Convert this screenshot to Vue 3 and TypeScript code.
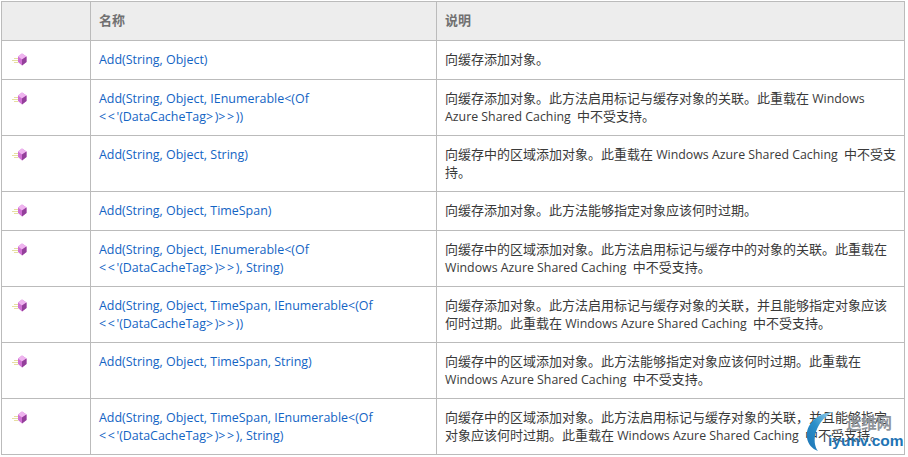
<script setup lang="ts">
interface Row { name: string[]; desc: string[] }
interface Run { text: string; cjk: boolean }
interface NameRun { text: string; angle: boolean }

const rows: Row[] = [
  { name: ['Add(String, Object)'], desc: ['向缓存添加对象。'] },
  { name: ['Add(String, Object, IEnumerable<(Of', "<<'(DataCacheTag>)>>))"], desc: ['向缓存添加对象。此方法启用标记与缓存对象的关联。此重载在 Windows', 'Azure Shared Caching 中不受支持。'] },
  { name: ['Add(String, Object, String)'], desc: ['向缓存中的区域添加对象。此重载在 Windows Azure Shared Caching 中不受支', '持。'] },
  { name: ['Add(String, Object, TimeSpan)'], desc: ['向缓存添加对象。此方法能够指定对象应该何时过期。'] },
  { name: ['Add(String, Object, IEnumerable<(Of', "<<'(DataCacheTag>)>>), String)"], desc: ['向缓存中的区域添加对象。此方法启用标记与缓存中的对象的关联。此重载在', 'Windows Azure Shared Caching 中不受支持。'] },
  { name: ['Add(String, Object, TimeSpan, IEnumerable<(Of', "<<'(DataCacheTag>)>>))"], desc: ['向缓存添加对象。此方法启用标记与缓存对象的关联，并且能够指定对象应该', '何时过期。此重载在 Windows Azure Shared Caching 中不受支持。'] },
  { name: ['Add(String, Object, TimeSpan, String)'], desc: ['向缓存中的区域添加对象。此方法能够指定对象应该何时过期。此重载在', 'Windows Azure Shared Caching 中不受支持。'] },
  { name: ['Add(String, Object, TimeSpan, IEnumerable<(Of', "<<'(DataCacheTag>)>>), String)"], desc: ['向缓存中的区域添加对象。此方法启用标记与缓存对象的关联，并且能够指定', '对象应该何时过期。此重载在 Windows Azure Shared Caching 中不受支持。'] },
]

function runs(line: string): Run[] {
  return line
    .split(/([\u3000-\u9fff\uff00-\uffef]+)/)
    .filter((t) => t.length > 0)
    .map((t) => ({ text: t, cjk: /^[\u3000-\u9fff\uff00-\uffef]/.test(t) }))
}

function nameRuns(line: string, index: number): NameRun[] {
  if (index === 0) return [{ text: line, angle: false }]
  return line
    .split(/([<>]+)/)
    .filter((t) => t.length > 0)
    .map((t) => ({ text: t, angle: /^[<>]/.test(t) }))
}
</script>

<template>
  <div class="page">
    <div class="table">
      <div class="row head">
        <div class="cell c1"></div>
        <div class="cell c2">名称</div>
        <div class="cell c3">说明</div>
      </div>
      <div v-for="(r, i) in rows" :key="i" class="row">
        <div class="cell c1">
          <svg class="icon" width="16" height="13" viewBox="0 0 16 13">
            <path d="M3 5.500h4M1 7.500h6M3 9.500h4" stroke="#e6dfa0" stroke-width="1" fill="none" />
            <path d="M11 0.500L15.500 3.500V9L11 12.500 7 9V3.500z" fill="#d070d4" />
            <path d="M11 0.500L15.500 3.500 11 6.500 7 3.500z" fill="#efb4ef" />
            <path d="M11 6.500L15.500 3.500V9L11 12.500z" fill="#93409a" />
          </svg>
        </div>
        <div class="cell c2">
          <a v-for="(l, j) in r.name" :key="j" class="line"><span v-for="(t, k) in nameRuns(l, j)" :key="k" :class="{ angle: t.angle }">{{ t.text }}</span></a>
        </div>
        <div class="cell c3">
          <span v-for="(l, j) in r.desc" :key="j" class="line"><span v-for="(t, k) in runs(l)" :key="k" :class="{ cjk: t.cjk }">{{ t.text }}</span></span>
        </div>
      </div>
    </div>
    <div class="mark">
      <svg width="34" height="44" viewBox="0 0 34 44" class="arc">
        <defs>
          <linearGradient id="arcFill" x1="1" y1="0" x2="0" y2="1">
            <stop offset="0" stop-color="#9fd4ee" />
            <stop offset="0.5" stop-color="#2a8fc9" />
            <stop offset="1" stop-color="#1f74b4" />
          </linearGradient>
        </defs>
        <path d="M29 2C12 3 1 16 3 28c1 6 5 11 11 13C7 32 11 11 29 2z" fill="url(#arcFill)" />
      </svg>
      <span class="cn">运维网</span>
      <span class="en">iyunv.com</span>
    </div>
  </div>
</template>

<style scoped>
.page {
  position: relative;
  width: 908px;
  height: 457px;
  overflow: hidden;
  background: #fff;
  font-family: "Open Sans", "Noto Sans CJK SC", sans-serif;
  font-size: 12.45px;
  color: #3a3a3a;
}
.table {
  margin: 1px 0 0 1px;
  width: 902px;
  border-top: 1px solid #bbb;
  border-left: 1px solid #bbb;
  border-right: 1px solid #bbb;
}
.row {
  display: grid;
  grid-template-columns: 89px 346px 1fr;
  border-bottom: 1px solid #bbb;
}
.head {
  background: #ededed;
  color: #707070;
  font-weight: 700;
  font-size: 13px;
}
.cell {
  min-height: 38px;
  padding: 10px 8px 9px;
  line-height: 18px;
  box-sizing: border-box;
}
.row .c3 { padding-top: 9px; padding-bottom: 10px; font-size: 12.35px; }
.head .cell,
.head .c3 { padding: 9px 8px 11px; font-size: 13px; }
.c1, .c2 { border-right: 1px solid #bbb; }
.row .c1 { padding: 12px 0 0 9px; }
.icon { display: block; }
.line { display: block; height: 18px; white-space: nowrap; }
a.line { color: #1364c4; }
.angle { letter-spacing: 1.6px; }
.cjk { font-size: 13px; line-height: 18px; }
.cjk:not(:first-child) { margin-left: 3px; }
.mark {
  position: absolute;
  left: 804px;
  top: 408px;
  width: 104px;
  height: 49px;
}
.arc { position: absolute; left: 0; top: 2px; }
.cn {
  position: absolute;
  left: 42px;
  top: 5px;
  font-size: 15.500px;
  font-weight: 700;
  line-height: 20px;
  letter-spacing: -0.300px;
  color: #8f959c;
}
.en {
  position: absolute;
  left: 24px;
  top: 23px;
  font-family: "Liberation Sans", sans-serif;
  font-size: 15.500px;
  line-height: 20px;
  font-weight: 700;
  color: #1f74b4;
}
</style>
